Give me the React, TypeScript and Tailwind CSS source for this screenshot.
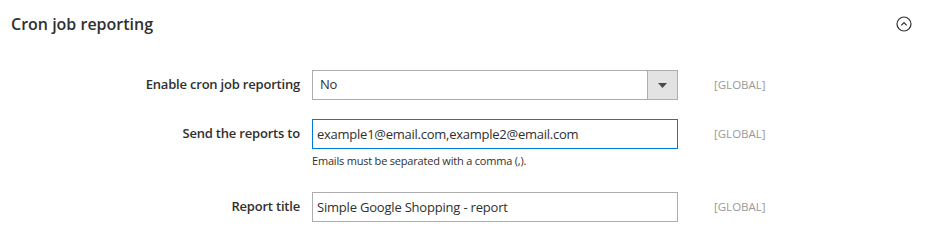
import { useState } from "react";

const font = { fontFamily: '"Open Sans", "Noto Sans", sans-serif' };

function Row({
  label,
  children,
  note,
  className = "",
}: {
  label: string;
  children: React.ReactNode;
  note?: string;
  className?: string;
}) {
  return (
    <div className={`flex items-start ${className}`}>
      <label className="w-[300px] shrink-0 h-[30px] flex items-center justify-end text-[13px] tracking-[-0.2px] font-semibold text-[#303030]">
        {label}
      </label>
      <div className="ml-[12px] w-[366px]">
        {children}
        {note && (
          <p className="mt-[5px] text-[11px] tracking-[-0.2px] leading-[14px] text-[#303030]">{note}</p>
        )}
      </div>
      <span className="ml-[36px] h-[30px] flex items-center text-[11.5px] text-[#999]">[GLOBAL]</span>
    </div>
  );
}

export default function App() {
  const [emails, setEmails] = useState("example1@email.com,example2@email.com");
  const [title, setTitle] = useState("Simple Google Shopping - report");

  return (
    <div className="w-[926px] h-[242px] bg-white overflow-hidden" style={font}>
      {/* Section header */}
      <div className="h-[46px] flex items-center justify-between pl-[11px] pr-[14px]">
        <h2 className="text-[16px] font-semibold text-[#303030] mt-[1px]">Cron job reporting</h2>
        <svg width="16" height="16" viewBox="0 0 16 16" className="mt-[2px]">
          <circle cx="8" cy="8" r="7" fill="none" stroke="#303030" strokeWidth="1.2" />
          <path d="M5.3 9.3 L8 6.6 L10.7 9.3" fill="none" stroke="#303030" strokeWidth="1.2" />
        </svg>
      </div>

      <div className="pt-[24px]">
        <Row label="Enable cron job reporting">
          <div className="flex h-[30px] border border-[#adadad] bg-white">
            <span className="flex-1 flex items-center pl-[7px] text-[13px] tracking-[-0.2px] text-[#303030]">No</span>
            <span className="w-[30px] flex items-center justify-center bg-[#e3e3e3] border-l border-[#adadad]">
              <svg width="9" height="5" viewBox="0 0 9 5">
                <path d="M0 0 H9 L4.5 5 Z" fill="#514943" />
              </svg>
            </span>
          </div>
        </Row>

        <Row label="Send the reports to" note="Emails must be separated with a comma (,)." className="mt-[19px]">
          <input
            value={emails}
            onChange={(e) => setEmails(e.target.value)}
            className="block w-full h-[30px] border border-[#007bdb] px-[4px] text-[13px] tracking-[-0.25px] text-[#303030] outline-none"
          />
        </Row>

        <Row label="Report title" className="mt-[24px]">
          <input
            value={title}
            onChange={(e) => setTitle(e.target.value)}
            className="block w-full h-[30px] border border-[#adadad] px-[4px] text-[13px] tracking-[-0.2px] text-[#303030] outline-none"
          />
        </Row>
      </div>
    </div>
  );
}
